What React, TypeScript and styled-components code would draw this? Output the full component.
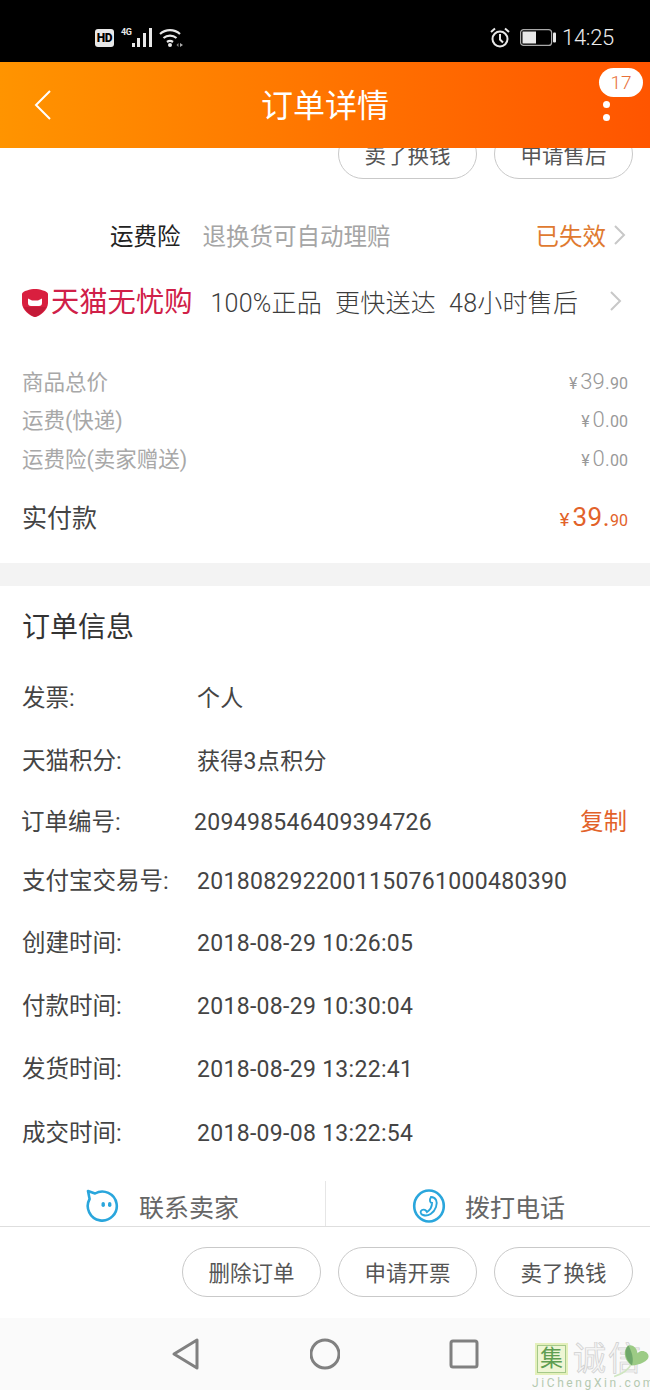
import React from "react";
import styled, { createGlobalStyle } from "styled-components";

const GlobalStyle = createGlobalStyle`
  html, body {
    margin: 0;
    padding: 0;
    background: #fff;
  }
  body {
    font-family: "Roboto", "Noto Sans CJK SC", sans-serif;
  }
`;

const Page = styled.div`
  position: relative;
  display: flex;
  flex-direction: column;
  width: 650px;
  height: 1390px;
  overflow: hidden;
  background: #fff;
`;

const StatusBar = styled.div`
  flex: 0 0 62px;
  display: flex;
  align-items: center;
  justify-content: space-between;
  padding: 13px 36px 0 95px;
  box-sizing: border-box;
  background: #000;
`;

const StatusGroup = styled.div`
  display: flex;
  align-items: center;
`;

const HdBadge = styled.span`
  width: 19px;
  height: 18px;
  border-radius: 3px;
  background: #e8e8e8;
  color: #000;
  font-size: 12px;
  font-weight: 900;
  line-height: 18px;
  letter-spacing: -0.3px;
  text-align: center;
`;

const NetworkLabel = styled.span`
  align-self: flex-start;
  margin: -1px 0 0 7px;
  width: 11px;
  color: #e8e8e8;
  font-size: 9px;
  font-weight: 700;
  line-height: 11px;
  letter-spacing: -0.3px;
`;

const WifiIcon = styled.svg`
  margin-left: 7px;
`;

const AlarmIcon = styled.svg`
  margin-right: 10px;
`;

const BatteryIcon = styled.svg`
  margin-right: 6px;
`;

const Clock = styled.span`
  font-size: 22px;
  font-weight: 300;
  line-height: 26px;
  letter-spacing: -0.3px;
  color: #ececec;
`;

const NavBar = styled.header`
  position: relative;
  flex: 0 0 86px;
  display: flex;
  align-items: center;
  justify-content: space-between;
  padding: 0 40px 0 34px;
  box-sizing: border-box;
  background: linear-gradient(90deg, #ff9400 0%, #ff5500 100%);
  z-index: 2;
`;

const NavTitle = styled.h1`
  position: absolute;
  left: 0;
  right: 0;
  top: 23px;
  margin: 0;
  text-align: center;
  font-size: 32px;
  line-height: 42px;
  font-weight: 400;
  color: #fff;
`;

const MoreDots = styled.div`
  display: flex;
  flex-direction: column;
  gap: 6px;
  margin-top: 11px;
`;

const Dot = styled.span`
  width: 7px;
  height: 7px;
  border-radius: 50%;
  background: #fff;
`;

const Badge = styled.span`
  position: absolute;
  top: 6px;
  right: 7px;
  width: 44px;
  height: 29px;
  border-radius: 15px;
  background: #fff;
  color: #e8703a;
  font-size: 19px;
  font-weight: 300;
  line-height: 29px;
  text-align: center;
`;

const Scroller = styled.main`
  flex: 1;
  min-height: 0;
  overflow: hidden;
`;

const TopActions = styled.div`
  display: flex;
  justify-content: flex-end;
  gap: 17px;
  margin-top: -19px;
  padding-right: 17px;
`;

const PillButton = styled.button`
  width: 139px;
  height: 50px;
  padding: 0 0 2px;
  box-sizing: border-box;
  border: 1px solid #c9c9c9;
  border-radius: 25px;
  background: #fff;
  color: #555;
  font-family: inherit;
  font-size: 21.5px;
`;

const InsuranceRow = styled.div`
  display: flex;
  align-items: center;
  height: 50px;
  margin-top: 31px;
  padding: 0 23px 0 110px;
  font-size: 23.5px;
`;

const InsuranceName = styled.span`
  color: #222;
`;

const InsuranceDesc = styled.span`
  flex: 1;
  margin-left: 22px;
  color: #a5a5a5;
`;

const InsuranceState = styled.span`
  color: #e07a30;
`;

const Chevron = styled.svg`
  width: 14px;
  height: 22px;
  margin-left: 7px;
  fill: none;
  stroke: #c8c8c8;
  stroke-width: 2;
`;

const TmallRow = styled.div`
  display: flex;
  align-items: center;
  height: 50px;
  margin-top: 16px;
  padding: 0 27px 0 22px;
`;

const TmallShield = styled.svg`
  flex: none;
  margin-top: 4px;
`;

const TmallName = styled.span`
  margin: 4px 0 0 3px;
  color: #d02048;
  font-size: 28.3px;
  font-weight: 400;
  line-height: 36px;
  white-space: nowrap;
`;

const Promises = styled.div`
  flex: 1;
  display: flex;
  gap: 13px;
  margin-left: 18px;
  color: #3c3c3c;
  font-size: 25px;
  font-weight: 300;
  letter-spacing: 0.25px;
  white-space: nowrap;
`;

const PriceList = styled.div`
  display: flex;
  flex-direction: column;
  margin-top: 35px;
  padding: 0 22px;
`;

const PriceRow = styled.div`
  display: flex;
  align-items: center;
  justify-content: space-between;
  height: 38.5px;
  color: #a8a8a8;
  font-size: 21.5px;
`;

const TotalRow = styled.div`
  display: flex;
  align-items: center;
  justify-content: space-between;
  height: 44px;
  margin-top: 17px;
  color: #444;
  font-size: 25px;
`;

const Amount = styled.span<{ $accent?: boolean }>`
  display: flex;
  align-items: baseline;
  padding-top: ${(p) => (p.$accent ? 3 : 2)}px;
  color: ${(p) => (p.$accent ? "#e2622a" : "#999")};
`;

const Yen = styled.span<{ $accent?: boolean }>`
  margin-right: 3px;
  font-size: ${(p) => (p.$accent ? 19 : 16)}px;
`;

const AmountMain = styled.span<{ $accent?: boolean }>`
  font-size: ${(p) => (p.$accent ? 26 : 22)}px;
  font-weight: ${(p) => (p.$accent ? 400 : 300)};
  letter-spacing: ${(p) => (p.$accent ? 0.5 : 0)}px;
`;

const AmountCents = styled.span`
  font-size: 16px;
`;

const SectionGap = styled.div`
  height: 23px;
  margin-top: 25px;
  background: #f3f3f3;
`;

const InfoSection = styled.section`
  padding: 0 22px;
`;

const InfoTitle = styled.h2`
  margin: 21px 0 0;
  color: #333;
  font-size: 28px;
  line-height: 42px;
  font-weight: 400;
`;

const InfoList = styled.div`
  display: flex;
  flex-direction: column;
  margin-top: 16px;
`;

const InfoRow = styled.div<{ $h: number; $shift?: boolean }>`
  display: flex;
  align-items: center;
  height: ${(p) => p.$h}px;
  margin-left: ${(p) => (p.$shift ? -1 : 0)}px;
  color: #444;
  font-size: 23.5px;
`;

const InfoLabel = styled.span<{ $shift?: boolean }>`
  flex: 0 0 ${(p) => (p.$shift ? 173 : 175)}px;
`;

// digits sit higher than the CJK labels in this font, so they get pushed down
const InfoValue = styled.span<{ $digits?: boolean }>`
  flex: 1;
  margin-top: ${(p) => (p.$digits ? 5 : 0)}px;
  color: #444;
  font-size: 23px;
  letter-spacing: 0.3px;
`;

const CopyLink = styled.span`
  margin-right: 1px;
  color: #e2622a;
`;

const ContactRow = styled.div`
  display: grid;
  grid-template-columns: 325px 1fr;
  height: 50px;
  margin-top: 18px;
`;

const ContactCell = styled.div<{ $divider?: boolean }>`
  display: flex;
  align-items: center;
  gap: 19px;
  padding-left: 86px;
  box-sizing: border-box;
  border-left: ${(p) => (p.$divider ? "1px solid #e6e6e6" : "none")};
  color: #666;
  font-size: 25px;
`;

const BottomBar = styled.div`
  flex: 0 0 92px;
  display: flex;
  justify-content: flex-end;
  gap: 17px;
  padding: 20px 17px 0 0;
  box-sizing: border-box;
  border-top: 1px solid #dedede;
  background: #fff;
`;

const SystemBar = styled.nav`
  flex: 0 0 72px;
  display: flex;
  align-items: center;
  justify-content: center;
  gap: 109px;
  background: #fafafa;
`;

const SystemIcon = styled.svg`
  width: 30px;
  height: 34px;
  fill: none;
  stroke: #808080;
  stroke-width: 3;
  stroke-linejoin: round;
`;

const Watermark = styled.div`
  position: absolute;
  right: 0;
  bottom: 0;
  width: 118px;
  height: 48px;
  overflow: hidden;
`;

const WatermarkTop = styled.div`
  position: relative;
  display: flex;
  align-items: center;
  height: 34px;
  padding-left: 3px;
`;

const WatermarkBox = styled.span`
  flex: none;
  width: 27px;
  height: 26px;
  margin-right: 5px;
  border: 3px solid #e4f0bb;
  outline: 1px solid #a5c98a;
  outline-offset: -3px;
  background: #eef6d4;
  color: #5f9e52;
  font-size: 23px;
  line-height: 26px;
  text-align: center;
`;

const WatermarkText = styled.span`
  color: #f4f4f4;
  -webkit-text-stroke: 0.7px #cfcfcf;
  font-size: 33px;
  line-height: 32px;
  letter-spacing: 2px;
  white-space: nowrap;
`;

const WatermarkLeaf = styled.svg`
  position: absolute;
  right: -3px;
  top: 1px;
`;

const WatermarkUrl = styled.div`
  margin-top: 1px;
  color: #b5c9b0;
  font-size: 12px;
  line-height: 13px;
  letter-spacing: 2.6px;
  white-space: nowrap;
`;

const ChevronIcon = () => (
  <Chevron viewBox="0 0 14 22">
    <path d="M2 2 L11 11 L2 20" />
  </Chevron>
);

const Price = ({
  main,
  cents,
  accent,
}: {
  main: string;
  cents: string;
  accent?: boolean;
}) => (
  <Amount $accent={accent}>
    <Yen $accent={accent}>¥</Yen>
    <AmountMain $accent={accent}>{main}</AmountMain>
    <AmountCents>{cents}</AmountCents>
  </Amount>
);

const infoRows = [
  { label: "发票:", value: "个人", h: 63 },
  { label: "天猫积分:", value: "获得3点积分", h: 63 },
  { label: "订单编号:", value: "209498546409394726", h: 58, digits: true, shift: true, copy: true },
  { label: "支付宝交易号:", value: "2018082922001150761000480390", h: 60, digits: true },
  { label: "创建时间:", value: "2018-08-29 10:26:05", h: 64, digits: true },
  { label: "付款时间:", value: "2018-08-29 10:30:04", h: 63, digits: true },
  { label: "发货时间:", value: "2018-08-29 13:22:41", h: 63, digits: true },
  { label: "成交时间:", value: "2018-09-08 13:22:54", h: 64, digits: true },
];

const App = () => {
  return (
    <Page>
      <GlobalStyle />
      <StatusBar>
        <StatusGroup>
          <HdBadge>HD</HdBadge>
          <NetworkLabel>4G</NetworkLabel>
          <svg width="20" height="20" viewBox="0 0 20 20" fill="#e8e8e8">
            <rect x="0" y="15" width="3" height="4" />
            <rect x="5" y="10" width="3" height="9" />
            <rect x="11" y="5" width="3" height="14" />
            <rect x="17" y="0" width="3" height="19" />
          </svg>
          <WifiIcon width="25" height="20" viewBox="0 0 25 20" fill="none" stroke="#e8e8e8" strokeWidth="2.2">
            <path d="M1 6 A15 15 0 0 1 21 6" />
            <path d="M4.5 10 A10 10 0 0 1 17.5 10" />
            <path d="M8 14 A5 5 0 0 1 14 14" />
            <circle cx="11" cy="17" r="2" fill="#e8e8e8" stroke="none" />
            <path d="M19.5 15v4l-2-2z" fill="#888" stroke="none" />
            <path d="M21 15l3 2-3 2z" fill="#aaa" stroke="none" />
          </WifiIcon>
        </StatusGroup>
        <StatusGroup>
          <AlarmIcon width="20" height="21" viewBox="0 0 20 21" fill="none" stroke="#e8e8e8" strokeWidth="2">
            <circle cx="10" cy="12" r="7.5" />
            <path d="M10 7v5.5l3 3M1 5l4-3.5M19 5l-4-3.5" />
          </AlarmIcon>
          <BatteryIcon width="36" height="17" viewBox="0 0 36 17">
            <rect x="0.6" y="0.6" width="31" height="15.8" rx="3" fill="none" stroke="#a8a8a8" strokeWidth="1.2" />
            <rect x="2.5" y="2.5" width="13.5" height="12" fill="#e8e8e8" />
            <rect x="33" y="3.5" width="3" height="10" rx="1" fill="#e8e8e8" />
          </BatteryIcon>
          <Clock>14:25</Clock>
        </StatusGroup>
      </StatusBar>

      <NavBar>
        <svg width="18" height="32" viewBox="0 0 18 32" fill="none" stroke="#fff" strokeWidth="2">
          <path d="M16 2 L2 16 L16 30" />
        </svg>
        <NavTitle>订单详情</NavTitle>
        <MoreDots>
          <Dot />
          <Dot />
        </MoreDots>
        <Badge>17</Badge>
      </NavBar>

      <Scroller>
        <TopActions>
          <PillButton>卖了换钱</PillButton>
          <PillButton>申请售后</PillButton>
        </TopActions>

        <InsuranceRow>
          <InsuranceName>运费险</InsuranceName>
          <InsuranceDesc>退换货可自动理赔</InsuranceDesc>
          <InsuranceState>已失效</InsuranceState>
          <ChevronIcon />
        </InsuranceRow>

        <TmallRow>
          <TmallShield width="26" height="28" viewBox="0 0 26 28">
            <path d="M13 0 C17 0 26 2 26 5 V14 C26 21 18 27 13 28 C8 27 0 21 0 14 V5 C0 2 9 0 13 0 Z" fill="#d91f3f" />
            <path d="M2 18 H24 C22 23 16 27 13 28 C10 27 4 23 2 18 Z" fill="#c41a38" />
            <path d="M6 9.5 L10 11.5 H16 L20 9.5 V14 Q20 17 17 17 H9 Q6 17 6 14 Z" fill="#fff" />
          </TmallShield>
          <TmallName>天猫无忧购</TmallName>
          <Promises>
            <span>100%正品</span>
            <span>更快送达</span>
            <span>48小时售后</span>
          </Promises>
          <ChevronIcon />
        </TmallRow>

        <PriceList>
          <PriceRow>
            <span>商品总价</span>
            <Price main="39." cents="90" />
          </PriceRow>
          <PriceRow>
            <span>运费(快递)</span>
            <Price main="0." cents="00" />
          </PriceRow>
          <PriceRow>
            <span>运费险(卖家赠送)</span>
            <Price main="0." cents="00" />
          </PriceRow>
          <TotalRow>
            <span>实付款</span>
            <Price main="39." cents="90" accent />
          </TotalRow>
        </PriceList>

        <SectionGap />

        <InfoSection>
          <InfoTitle>订单信息</InfoTitle>
          <InfoList>
            {infoRows.map((row) => (
              <InfoRow key={row.label} $h={row.h} $shift={row.shift}>
                <InfoLabel $shift={row.shift}>{row.label}</InfoLabel>
                <InfoValue $digits={row.digits}>{row.value}</InfoValue>
                {row.copy && <CopyLink>复制</CopyLink>}
              </InfoRow>
            ))}
          </InfoList>
        </InfoSection>

        <ContactRow>
          <ContactCell>
            <svg width="34" height="34" viewBox="0 0 34 34" fill="none" stroke="#2aa6dc" strokeWidth="2.6">
              <path d="M9 4.5 A14.5 14.5 0 1 1 3.6 10 L2 2 Z" strokeLinejoin="round" />
              <rect x="15.5" y="13" width="3.4" height="5" rx="1.7" fill="#2aa6dc" stroke="none" />
              <rect x="22" y="13" width="3.4" height="5" rx="1.7" fill="#2aa6dc" stroke="none" />
            </svg>
            <span>联系卖家</span>
          </ContactCell>
          <ContactCell $divider>
            <svg width="34" height="34" viewBox="0 0 34 34" fill="none" stroke="#2aa6dc" strokeWidth="2.6">
              <ellipse cx="17" cy="17" rx="14.8" ry="15.5" />
              <path d="M19 8 C24 8 26 13 24 18 C22 24 16 28 11 26 C8 25 8 22 10 21 C12 20 14 21 15 23 C18 21 20 17 20 14 C18 14 17 11 19 8 Z" strokeWidth="1.9" />
            </svg>
            <span>拨打电话</span>
          </ContactCell>
        </ContactRow>
      </Scroller>

      <BottomBar>
        <PillButton>删除订单</PillButton>
        <PillButton>申请开票</PillButton>
        <PillButton>卖了换钱</PillButton>
      </BottomBar>

      <SystemBar>
        <SystemIcon viewBox="0 0 30 34">
          <path d="M26 3 V31 L3 17 Z" />
        </SystemIcon>
        <SystemIcon viewBox="0 0 30 34">
          <circle cx="15" cy="17" r="14" />
        </SystemIcon>
        <SystemIcon viewBox="0 0 30 34">
          <rect x="2" y="4" width="26" height="26" rx="2" />
        </SystemIcon>
      </SystemBar>

      <Watermark>
        <WatermarkTop>
          <WatermarkBox>集</WatermarkBox>
          <WatermarkText>诚信</WatermarkText>
          <WatermarkLeaf width="40" height="36" viewBox="0 0 36 32" fill="none">
            <path d="M1 30 C8 28 14 24 17 18" stroke="#cfe6c0" strokeWidth="1.5" />
            <path d="M17 20 C8 14 10 4 14 2 C19 1 22 6 22 9 C26 5 32 8 32 12 C32 16 24 20 17 20 Z" fill="#9ccb85" />
            <path d="M17 20 C10 14 10 5 14 2 C17 8 19 14 17 20 Z" fill="#6fa86b" />
          </WatermarkLeaf>
        </WatermarkTop>
        <WatermarkUrl>JiChengXin.com</WatermarkUrl>
      </Watermark>
    </Page>
  );
};

export default App;
